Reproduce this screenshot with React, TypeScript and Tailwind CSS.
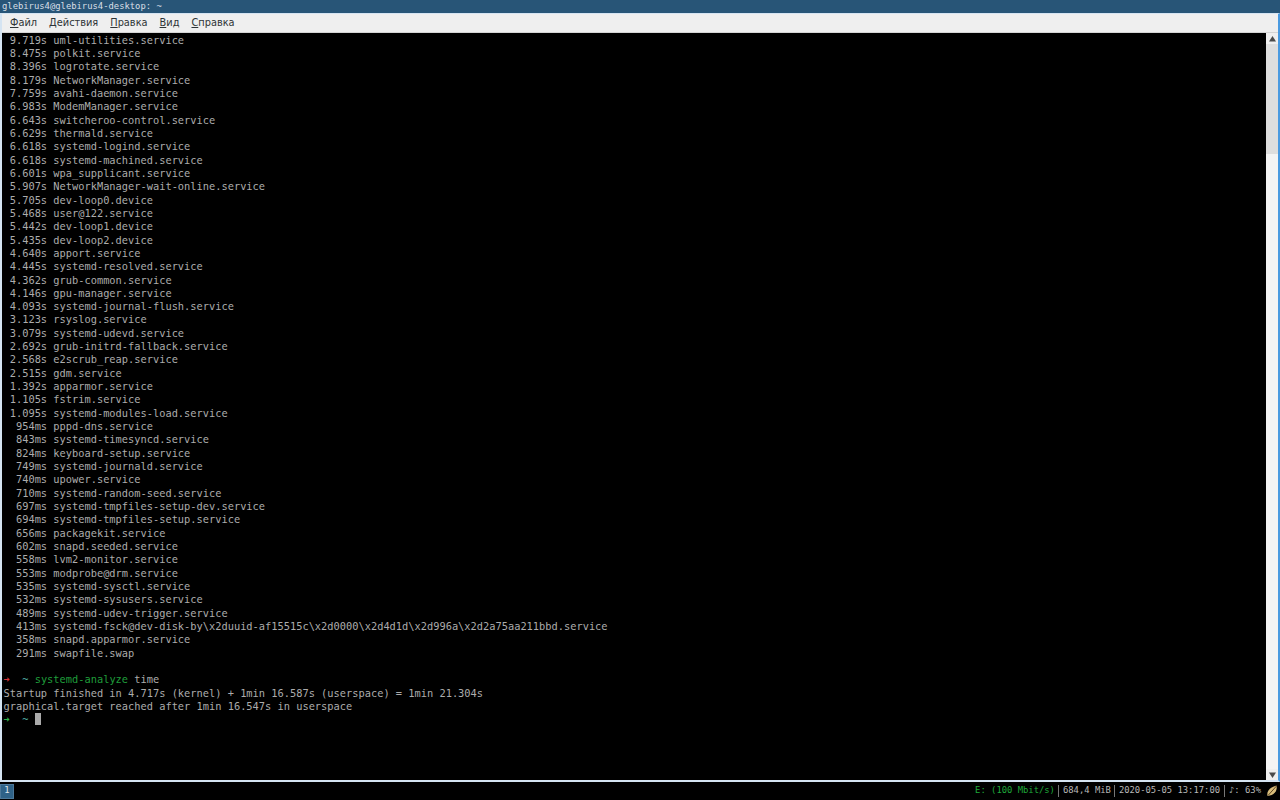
import * as React from 'react';

const serviceLines = [
  ' 9.719s uml-utilities.service',
  ' 8.475s polkit.service',
  ' 8.396s logrotate.service',
  ' 8.179s NetworkManager.service',
  ' 7.759s avahi-daemon.service',
  ' 6.983s ModemManager.service',
  ' 6.643s switcheroo-control.service',
  ' 6.629s thermald.service',
  ' 6.618s systemd-logind.service',
  ' 6.618s systemd-machined.service',
  ' 6.601s wpa_supplicant.service',
  ' 5.907s NetworkManager-wait-online.service',
  ' 5.705s dev-loop0.device',
  ' 5.468s user@122.service',
  ' 5.442s dev-loop1.device',
  ' 5.435s dev-loop2.device',
  ' 4.640s apport.service',
  ' 4.445s systemd-resolved.service',
  ' 4.362s grub-common.service',
  ' 4.146s gpu-manager.service',
  ' 4.093s systemd-journal-flush.service',
  ' 3.123s rsyslog.service',
  ' 3.079s systemd-udevd.service',
  ' 2.692s grub-initrd-fallback.service',
  ' 2.568s e2scrub_reap.service',
  ' 2.515s gdm.service',
  ' 1.392s apparmor.service',
  ' 1.105s fstrim.service',
  ' 1.095s systemd-modules-load.service',
  '  954ms pppd-dns.service',
  '  843ms systemd-timesyncd.service',
  '  824ms keyboard-setup.service',
  '  749ms systemd-journald.service',
  '  740ms upower.service',
  '  710ms systemd-random-seed.service',
  '  697ms systemd-tmpfiles-setup-dev.service',
  '  694ms systemd-tmpfiles-setup.service',
  '  656ms packagekit.service',
  '  602ms snapd.seeded.service',
  '  558ms lvm2-monitor.service',
  '  553ms modprobe@drm.service',
  '  535ms systemd-sysctl.service',
  '  532ms systemd-sysusers.service',
  '  489ms systemd-udev-trigger.service',
  '  413ms systemd-fsck@dev-disk-by\\x2duuid-af15515c\\x2d0000\\x2d4d1d\\x2d996a\\x2d2a75aa211bbd.service',
  '  358ms snapd.apparmor.service',
  '  291ms swapfile.swap',
  '',
];

const menuItems = [
  { hotkey: 'Ф', rest: 'айл' },
  { hotkey: 'Д', rest: 'ействия' },
  { hotkey: 'П', rest: 'равка' },
  { hotkey: 'В', rest: 'ид' },
  { hotkey: 'С', rest: 'правка' },
];

const Arrow = ({ className }: { className: string }) => (
  <svg width="7" height="6" viewBox="0 0 7 6" className={className}>
    <path d="M0 5.5 L3.5 0 L7 5.5 Z" fill="#4a4a4a" />
  </svg>
);

export default function App() {
  return (
    <div className="flex h-[800px] w-[1280px] flex-col overflow-hidden bg-black font-['DejaVu_Sans_Mono',monospace]">
      {/* Title bar */}
      <div className="flex h-[13px] items-center bg-[#285577] pl-[2px] text-[8.85px] leading-[13px] text-[#d8dfe6]">
        glebirus4@glebirus4-desktop: ~
      </div>

      {/* Window */}
      <div className="flex h-[769px] flex-col border-x-2 border-b-2 border-t border-[#d5e4f2] border-r-[#4a9ae0]">
        <div className="flex h-[19px] items-center gap-[12px] border-b border-[#d4d4d4] bg-[#efefef] pl-[8px] font-['DejaVu_Sans',sans-serif] text-[9.8px] text-[#2e3436]">
          {menuItems.map((item) => (
            <span key={item.hotkey}>
              <span className="underline">{item.hotkey}</span>
              {item.rest}
            </span>
          ))}
        </div>

        <div className="flex min-h-0 flex-1">
          <div className="min-w-0 flex-1 overflow-hidden bg-black pl-[1.5px] pt-[0.6px] text-[10.35px] leading-[13.33px] whitespace-pre text-[#acacac]">
            {serviceLines.map((line, i) => (
              <div key={i} className="h-[13.33px]">
                {line}
              </div>
            ))}
            <div className="h-[13.33px]">
              <span className="text-[#d8343a]">➜</span>
              <span className="text-[#4fa8a0]">  ~ </span>
              <span className="text-[#1f9d3a]">systemd-analyze</span> time
            </div>
            <div className="h-[13.33px]">
              Startup finished in 4.717s (kernel) + 1min 16.587s (userspace) = 1min 21.304s
            </div>
            <div className="h-[13.33px]">graphical.target reached after 1min 16.547s in userspace</div>
            <div className="flex h-[13.33px]">
              <span className="text-[#2fb34a]">➜</span>
              <span className="text-[#4fa8a0]">  ~ </span>
              <span className="h-[12px] w-[6px] bg-[#aaaaaa]" />
            </div>
          </div>

          {/* Scrollbar */}
          <div className="flex w-[12px] flex-col bg-[#f4f4f4]">
            <div className="flex h-[11px] items-center justify-center bg-[#efefef]">
              <Arrow className="" />
            </div>
            <div className="h-[110px] bg-[#dedede]" />
            <div className="flex-1" />
            <div className="flex h-[11px] items-center justify-center bg-[#efefef]">
              <Arrow className="rotate-180" />
            </div>
          </div>
        </div>
      </div>

      {/* Status bar */}
      <div className="flex h-[18px] items-center bg-black pr-[2px] text-[8.85px] text-[#b8b8b8]">
        <div className="flex h-[15px] w-[14px] items-center justify-center border border-[#4c7899] bg-[#2f6287] text-[#dfe6ec]">
          1
        </div>
        <div className="flex-1" />
        <span className="text-[#1fa83a]">E: (100 Mbit/s)</span>
        <span className="ml-[3px] mr-[4px] h-[12px] w-px bg-[#777]" />
        <span>684,4 MiB</span>
        <span className="ml-[3px] mr-[4px] h-[12px] w-px bg-[#777]" />
        <span>2020-05-05 13:17:00</span>
        <span className="ml-[4px] mr-[4px] h-[12px] w-px bg-[#777]" />
        <span>♪: 63%</span>
        <svg width="12" height="14" viewBox="0 0 12 14" className="ml-[5px]">
          <path d="M1.5 12 C0.5 8 3 3.5 10.5 1.5 C11.5 6 9 11 1.5 12 Z" fill="#d9bd7c" />
          <path d="M2 11.5 L10.5 2" stroke="#5e4620" strokeWidth="1" />
        </svg>
      </div>
    </div>
  );
}
